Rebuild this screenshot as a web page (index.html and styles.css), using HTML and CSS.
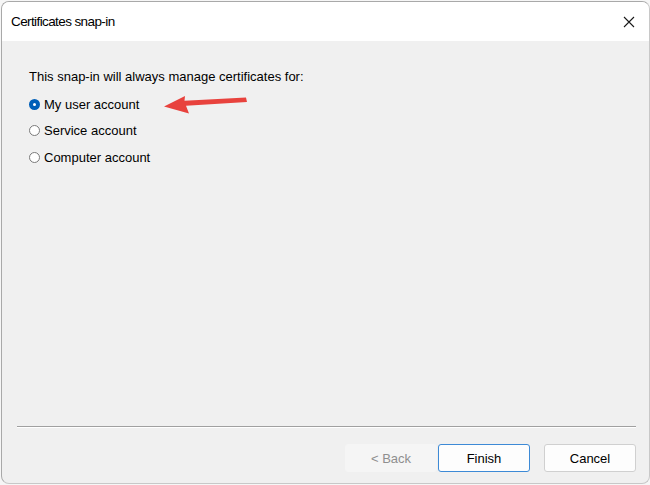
FILE: index.html
```html
<!DOCTYPE html>
<html lang="en">
<head>
    <meta charset="UTF-8">
    <title>Certificates snap-in</title>
    <link rel="stylesheet" href="styles.css">
</head>
<body>

    <div class="window">
        <div class="titlebar">
            <span class="title">Certificates snap-in</span>
            <svg class="close" width="12" height="12" viewBox="0 0 12 12">
                <path d="M1 1 L11 11 M11 1 L1 11" stroke="#1a1a1a" stroke-width="1.1" fill="none"/>
            </svg>
        </div>

        <div class="content">
            <p class="intro">This snap-in will always manage certificates for:</p>
            <label class="option"><span class="radio checked"></span>My user account</label>
            <label class="option"><span class="radio"></span>Service account</label>
            <label class="option"><span class="radio"></span>Computer account</label>

            <!-- annotation arrow -->
            <svg class="arrow" width="100" height="30" viewBox="160 90 100 30">
                <polygon points="163,105.5 184,95 183.5,99.8 245,96.5 246,101 185,104.8 188,112.5" fill="#e8423d"/>
            </svg>
        </div>

        <div class="footer">
            <div class="separator"></div>
            <div class="buttons">
                <button class="btn disabled">&lt; Back</button>
                <button class="btn primary">Finish</button>
                <button class="btn cancel">Cancel</button>
            </div>
        </div>
    </div>

</body>
</html>
```

FILE: styles.css
```css
body {
    margin: 0;
    background-color: #f6f6f6;
    font-family: 'Liberation Sans', Arial, sans-serif;
}
.window {
    margin: 1px 0 0 1px;
    width: 647px;
    height: 481px;
    border: 1px solid #a9a9a9;
    border-right-color: #c8c8c8;
    border-bottom-color: #c8c8c8;
    border-radius: 8px;
    background-color: #f0f0f0;
    overflow: hidden;
    display: flex;
    flex-direction: column;
    position: relative;
}
.titlebar {
    height: 39px;
    background-color: white;
    display: flex;
    align-items: center;
    justify-content: space-between;
    padding: 0 14px 0 9px;
}
.title {
    font-family: 'Liberation Sans', Arial, sans-serif;
    font-size: 13.5px;
    letter-spacing: -0.6px;
    color: #000;
}
.content {
    flex: 1;
    padding: 28px 0 0 27px;
    font-size: 13px;
    color: #000;
}
.intro {
    margin: 0 0 7px 0;
    height: 15px;
    line-height: 15px;
}
.option {
    display: flex;
    align-items: center;
    height: 26.5px;
}
.radio {
    width: 9px;
    height: 9px;
    border: 1px solid #7a7a7a;
    border-radius: 50%;
    background-color: #fff;
    margin-right: 4px;
    box-sizing: content-box;
}
.radio.checked {
    width: 3px;
    height: 3px;
    border: 4px solid #005fb8;
}
.arrow {
    position: absolute;
    left: 159px;
    top: 89px;
}
.footer {
    padding: 0 13px 11px 15px;
}
.separator {
    height: 1px;
    background-color: #a0a0a0;
    border-bottom: 1px solid #fff;
    margin-bottom: 16px;
}
.buttons {
    display: flex;
    justify-content: flex-end;
}
.btn {
    width: 92px;
    height: 28px;
    font-family: 'Liberation Sans', Arial, sans-serif;
    font-size: 13px;
    color: #000;
    background-color: #fdfdfd;
    border: 1px solid #d0d0d0;
    border-radius: 3px;
}
.btn.disabled {
    color: #8f8f8f;
    background-color: #f5f5f5;
    border-color: #f5f5f5;
    margin-right: 1px;
}
.btn.primary {
    border-color: #3d8ad6;
    margin-right: 14px;
}
```
